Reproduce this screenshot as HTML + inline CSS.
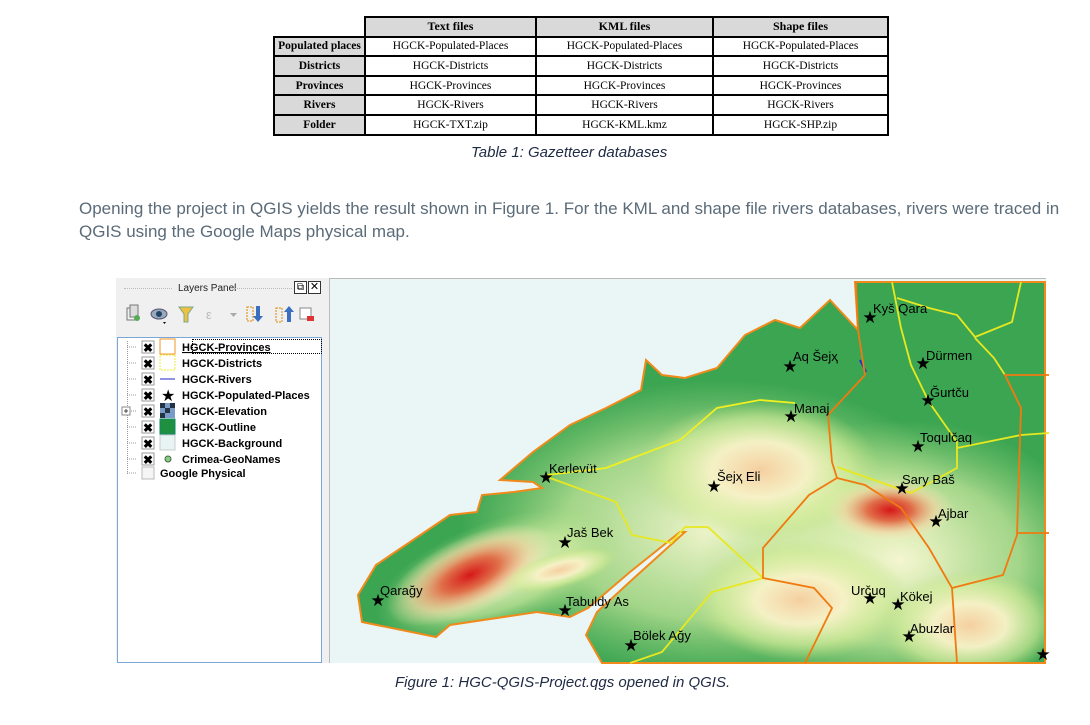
<!DOCTYPE html>
<html><head><meta charset="utf-8">
<style>
*{margin:0;padding:0;box-sizing:border-box}
body{width:1090px;height:725px;background:#fff;position:relative;overflow:hidden;font-family:"Liberation Sans",sans-serif}
table{position:absolute;left:273px;top:16px;border-collapse:collapse;font-family:"Liberation Serif",serif;font-size:11.5px;color:#000}
td{border:2px solid #000;text-align:center;height:19.6px;padding:0;background:#fff}
tr.h td{background:#d9d9d9;font-weight:bold;font-size:12px}
td.r{background:#d9d9d9;font-weight:bold;width:91px}
.cap{position:absolute;font-style:italic;color:#1f2a44;font-size:15px;white-space:nowrap}
.p{position:absolute;left:79px;color:#5b6b78;font-size:17px;white-space:nowrap;letter-spacing:0px}
.panel{position:absolute;left:116px;top:278px;width:214px;height:385px;background:#f0f0f0;border-right:1px solid #bbb}
.tree{position:absolute;left:117px;top:337px;width:205px;height:326px;background:#fff;border:1px solid #7aa7d8}
</style></head><body>
<table>
<tr class="h"><td style="border:none;background:#fff;width:91px"></td><td style="width:171px">Text files</td><td style="width:177px">KML files</td><td style="width:175px">Shape files</td></tr>
<tr><td class="r">Populated places</td><td>HGCK-Populated-Places</td><td>HGCK-Populated-Places</td><td>HGCK-Populated-Places</td></tr>
<tr><td class="r">Districts</td><td>HGCK-Districts</td><td>HGCK-Districts</td><td>HGCK-Districts</td></tr>
<tr><td class="r">Provinces</td><td>HGCK-Provinces</td><td>HGCK-Provinces</td><td>HGCK-Provinces</td></tr>
<tr><td class="r">Rivers</td><td>HGCK-Rivers</td><td>HGCK-Rivers</td><td>HGCK-Rivers</td></tr>
<tr><td class="r">Folder</td><td>HGCK-TXT.zip</td><td>HGCK-KML.kmz</td><td>HGCK-SHP.zip</td></tr>
</table>
<div class="cap" style="left:471px;top:144px">Table 1: Gazetteer databases</div>
<div class="p" style="top:199px">Opening the project in QGIS yields the result shown in Figure 1. For the KML and shape file rivers databases, rivers were traced in</div>
<div class="p" style="top:222px">QGIS using the Google Maps physical map.</div>

<div class="panel">
 <div style="position:absolute;left:62px;top:5px;font-size:10px;color:#222">Layers Panel</div>
 <div style="position:absolute;left:8px;top:10px;width:48px;border-top:1px dotted #bbb"></div>
 <div style="position:absolute;left:118px;top:10px;width:58px;border-top:1px dotted #bbb"></div>
 <div style="position:absolute;left:178px;top:3px;width:13px;height:13px;border:1px solid #333;background:#fff;font-size:10px;line-height:11px;text-align:center">&#x29C9;</div>
 <div style="position:absolute;left:192px;top:3px;width:13px;height:13px;border:1px solid #333;background:#fff;font-size:11px;line-height:11px;text-align:center">✕</div>
 <svg style="position:absolute;left:0;top:22px" width="214" height="30">
  <rect x="11" y="8" width="8" height="12" fill="none" stroke="#777"/><rect x="14" y="5" width="8" height="12" fill="#ddd" stroke="#777"/><circle cx="21" cy="18" r="3" fill="#5a5"/>
  <ellipse cx="43" cy="14" rx="8" ry="5" fill="#9ab" stroke="#557"/><circle cx="43" cy="14" r="3" fill="#246"/><path d="M47 22 l3 0 -1.5 2z" fill="#000"/>
  <path d="M63 7 h14 l-5 7 v8 h-4 v-8z" fill="#f0c040" stroke="#7a8"/>
  <text x="90" y="19" font-size="13" fill="#bbb">ε</text><path d="M114 13 h7 l-3.5 4z" fill="#aaa"/>
  <rect x="131" y="7" width="6" height="14" fill="none" stroke="#d80" stroke-dasharray="2 1"/><path d="M140 6 v10 h-3 l5 6 5-6 h-3 v-10z" fill="#3a6ec0"/>
  <rect x="160" y="8" width="6" height="14" fill="none" stroke="#d80" stroke-dasharray="2 1"/><path d="M171 22 v-10 h-3 l5-6 5 6 h-3 v10z" fill="#3a6ec0"/>
  <rect x="184" y="8" width="11" height="11" fill="#fff" stroke="#888"/><rect x="191" y="16" width="7" height="5" fill="#d33"/>
 </svg>
</div>
<div class="tree">
 <div style="position:absolute;left:9px;top:3px;height:133px;border-left:1px dotted #999"></div>
 <div style="position:absolute;left:74px;top:1px;width:130px;height:15px;border:1px dotted #000"></div>
</div>
<svg style="position:absolute;left:0;top:0" width="330" height="480">
 <g stroke="#999" stroke-dasharray="1 1"><line x1="127" y1="347" x2="137" y2="347"/><line x1="127" y1="363" x2="137" y2="363"/><line x1="127" y1="379" x2="137" y2="379"/><line x1="127" y1="395" x2="137" y2="395"/><line x1="131" y1="411" x2="137" y2="411"/><line x1="127" y1="427" x2="137" y2="427"/><line x1="127" y1="443" x2="137" y2="443"/><line x1="127" y1="459" x2="137" y2="459"/><line x1="127" y1="473" x2="137" y2="473"/></g>
 <rect x="122" y="407" width="8" height="8" fill="#fff" stroke="#888"/><path d="M124 411h4M126 409v4" stroke="#444"/>
 <g font-family="Liberation Sans" font-weight="bold" font-size="12" text-anchor="middle">
 <rect x="142" y="341" width="12" height="12" fill="#fff" stroke="#999"/><text x="148" y="352">✖</text>
 <rect x="142" y="357" width="12" height="12" fill="#fff" stroke="#999"/><text x="148" y="368">✖</text>
 <rect x="142" y="373" width="12" height="12" fill="#fff" stroke="#999"/><text x="148" y="384">✖</text>
 <rect x="142" y="389" width="12" height="12" fill="#fff" stroke="#999"/><text x="148" y="400">✖</text>
 <rect x="142" y="405" width="12" height="12" fill="#fff" stroke="#999"/><text x="148" y="416">✖</text>
 <rect x="142" y="421" width="12" height="12" fill="#fff" stroke="#999"/><text x="148" y="432">✖</text>
 <rect x="142" y="437" width="12" height="12" fill="#fff" stroke="#999"/><text x="148" y="448">✖</text>
 <rect x="142" y="453" width="12" height="12" fill="#fff" stroke="#999"/><text x="148" y="464">✖</text>
 </g>
 <rect x="142" y="467" width="12" height="12" fill="#f5f5f5" stroke="#bbb"/>
 <rect x="160" y="339" width="15" height="15" fill="#fff" stroke="#f0952a"/>
 <rect x="160" y="355" width="15" height="15" fill="#fff" stroke="#ee3" stroke-dasharray="2 1"/>
 <line x1="160" y1="379" x2="175" y2="379" stroke="#22c"/>
 <text x="161" y="401" font-size="16">★</text>
 <rect x="160" y="403" width="15" height="15" fill="#7a9ac8"/><rect x="160" y="403" width="5" height="5" fill="#234"/><rect x="170" y="403" width="5" height="5" fill="#234"/><rect x="165" y="408" width="5" height="5" fill="#234"/><rect x="160" y="413" width="5" height="5" fill="#234"/>
 <rect x="160" y="419" width="15" height="15" fill="#1f9040" stroke="#186"/>
 <rect x="160" y="435" width="15" height="15" fill="#e8f4f4" stroke="#ccc"/>
 <circle cx="168" cy="459" r="3" fill="#8c8" stroke="#464"/>
 <g font-family="Liberation Sans" font-weight="bold" font-size="11" fill="#000">
 <text x="182" y="351" text-decoration="underline">HGCK-Provinces</text>
 <text x="182" y="367">HGCK-Districts</text>
 <text x="182" y="383">HGCK-Rivers</text>
 <text x="182" y="399">HGCK-Populated-Places</text>
 <text x="182" y="415">HGCK-Elevation</text>
 <text x="182" y="431">HGCK-Outline</text>
 <text x="182" y="447">HGCK-Background</text>
 <text x="182" y="463">Crimea-GeoNames</text>
 <text x="160" y="477">Google Physical</text>
 </g>
</svg>

<svg style="position:absolute;left:0;top:0" width="1090" height="725">
 <defs>
  <clipPath id="land"><path id="lp" d="M855 282 L858 330 L830 300 L800 328 L775 320 L745 335 L717 368 L685 378 L662 375 L646 360 L641 390 L606 408 L570 425 L533 452 L500 480 L533 482 L542 488 L514 492 L482 495 L477 512 L450 515 L376 565 L358 595 L362 622 L436 637 L450 625 L537 612 L570 617 L588 608 L630 572 L680 532 L685 532 L634 578 L597 612 L586 635 L602 663 L1045 663 L1045 282Z"/></clipPath>
  <radialGradient id="r1"><stop offset="0" stop-color="#d61818"/><stop offset=".35" stop-color="#e0704a"/><stop offset=".7" stop-color="#f5d0a0" stop-opacity=".6"/><stop offset="1" stop-color="#f5f0c0" stop-opacity="0"/></radialGradient>
  <radialGradient id="r2"><stop offset="0" stop-color="#f5cfa0"/><stop offset=".4" stop-color="#f8f2c8" stop-opacity=".95"/><stop offset=".75" stop-color="#d8ee9c" stop-opacity=".6"/><stop offset="1" stop-color="#c0e080" stop-opacity="0"/></radialGradient>
  <radialGradient id="pl"><stop offset="0" stop-color="#f4f6d0"/><stop offset=".6" stop-color="#cfeaa0" stop-opacity=".7"/><stop offset="1" stop-color="#a0d880" stop-opacity="0"/></radialGradient>
 </defs>
 <rect x="330" y="278" width="716" height="385" fill="#eaf6f6"/>
 <line x1="330" y1="278.5" x2="1046" y2="278.5" stroke="#bbb"/>
 <g clip-path="url(#land)">
  <rect x="330" y="278" width="716" height="385" fill="#3ca552"/>
  <ellipse cx="720" cy="530" rx="260" ry="150" fill="url(#pl)"/>
  <ellipse cx="900" cy="560" rx="200" ry="140" fill="url(#pl)"/>
  <ellipse cx="500" cy="575" rx="130" ry="55" fill="url(#pl)" transform="rotate(-20 500 575)"/>
  <ellipse cx="760" cy="470" rx="120" ry="70" fill="url(#r2)"/>
  <ellipse cx="800" cy="600" rx="110" ry="60" fill="url(#r2)"/>
  <ellipse cx="970" cy="625" rx="90" ry="55" fill="url(#r2)"/>
  <ellipse cx="890" cy="510" rx="65" ry="32" fill="url(#r1)"/>
  <ellipse cx="470" cy="575" rx="90" ry="38" fill="url(#r1)" transform="rotate(-25 470 575)"/>
  <ellipse cx="560" cy="570" rx="60" ry="18" fill="url(#r2)" transform="rotate(-15 560 570)"/>
 </g>
 <use href="#lp" fill="none" stroke="#f08a1a" stroke-width="2"/>
 <path d="M860 360 L866 372" stroke="#2233cc" stroke-width="2"/>
 <g fill="none" stroke-width="1.8">
  <path d="M547 475 L606 468 L680 440 L717 408 L760 400 L795 403" stroke="#f0f020"/>
  <path d="M550 478 L616 502 L632 535 L671 543 L685 527 L708 527 L763 578 L712 592 L662 652 L630 663" stroke="#e8e820"/>
  <path d="M892 282 L901 328 L911 365 L929 402 L957 442 L957 468 L911 493 L837 467" stroke="#e8e820"/>
  <path d="M957 448 L1021 435 L1049 433" stroke="#e8e820"/>
  <path d="M897 298 L929 308 L957 315 L975 337 L1012 322 L1021 282" stroke="#e8e820"/>
  <path d="M975 338 L994 358 L1005 375" stroke="#e8e820"/>
  <path d="M865 375 L828 415 L832 462 L837 478 L809 495 L763 548 L763 578 L814 588 L832 608 L805 663" stroke="#f07a10"/>
  <path d="M837 478 L865 485 L901 508 L929 548 L952 588 L957 663" stroke="#f07a10"/>
  <path d="M952 588 L1003 575 L1017 535 L1021 408 L1005 375 L1049 375" stroke="#f07a10"/>
  <path d="M1017 533 L1049 533" stroke="#f07a10"/>
  <path d="M856 282 L858 330 L865 375" stroke="#f07a10"/>
 </g>
 <g font-family="Liberation Sans" font-size="17" fill="#000" text-anchor="middle">
  <text x="870" y="323">★</text><text x="790" y="372">★</text><text x="923" y="369">★</text><text x="928" y="406">★</text><text x="791" y="422">★</text><text x="918" y="452">★</text><text x="546" y="483">★</text><text x="714" y="492">★</text><text x="902" y="494">★</text><text x="936" y="527">★</text><text x="565" y="548">★</text><text x="870" y="604">★</text><text x="898" y="610">★</text><text x="378" y="606">★</text><text x="565" y="616">★</text><text x="909" y="642">★</text><text x="631" y="651">★</text><text x="1043" y="660">★</text>
 </g>
 <g font-family="Liberation Sans" font-size="13" fill="#000">
  <text x="873" y="313">Kyš Qara</text><text x="793" y="361">Aq Šejҳ</text><text x="926" y="360">Dürmen</text><text x="930" y="397">Ğurtču</text><text x="794" y="413">Manaj</text><text x="920" y="442">Toqulčaq</text><text x="549" y="473">Kerlevüt</text><text x="717" y="481">Šejҳ Eli</text><text x="902" y="484">Sary Baš</text><text x="938" y="518">Ajbar</text><text x="567" y="537">Jaš Bek</text><text x="851" y="595">Určuq</text><text x="900" y="601">Kökej</text><text x="380" y="595">Qarağy</text><text x="566" y="606">Tabuldy As</text><text x="910" y="633">Abuzlar</text><text x="633" y="640">Bölek Ağy</text>
 </g>
</svg>
<div class="cap" style="left:395px;top:674px">Figure 1: HGC-QGIS-Project.qgs opened in QGIS.</div>
</body></html>
